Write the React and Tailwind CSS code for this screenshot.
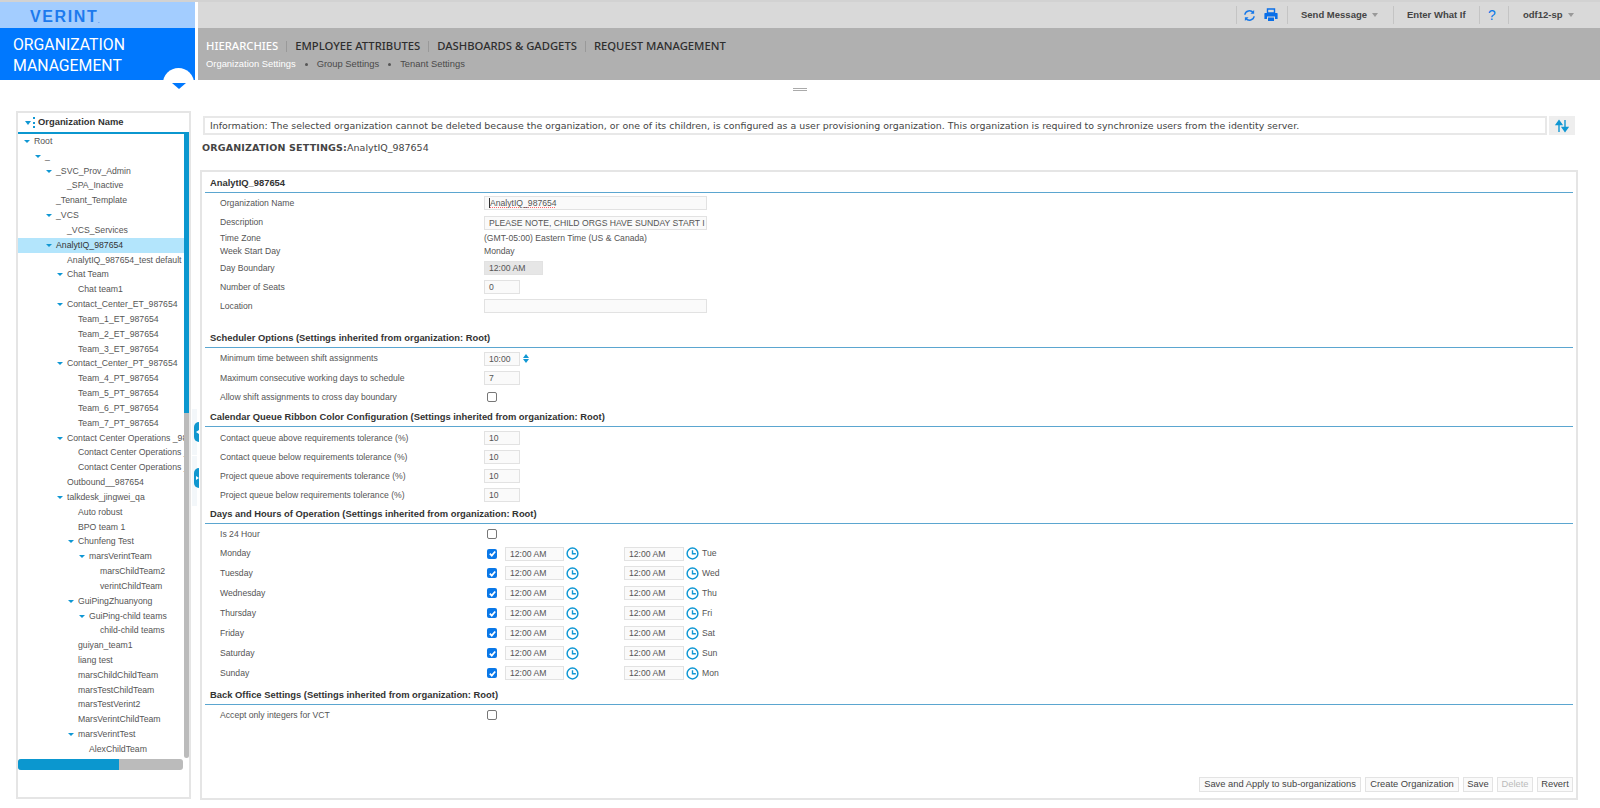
import React from "react";

const tree = [
  [0, "Root", 1], [1, "_", 1], [2, "_SVC_Prov_Admin", 1], [3, "_SPA_Inactive"], [2, "_Tenant_Template"], [2, "_VCS", 1], [3, "_VCS_Services"],
  [2, "AnalytIQ_987654", 1, 1], [3, "AnalytIQ_987654_test default rule"], [3, "Chat Team", 1], [4, "Chat team1"],
  [3, "Contact_Center_ET_987654", 1], [4, "Team_1_ET_987654"], [4, "Team_2_ET_987654"], [4, "Team_3_ET_987654"],
  [3, "Contact_Center_PT_987654", 1], [4, "Team_4_PT_987654"], [4, "Team_5_PT_987654"], [4, "Team_6_PT_987654"], [4, "Team_7_PT_987654"],
  [3, "Contact Center Operations _987654", 1], [4, "Contact Center Operations _1"], [4, "Contact Center Operations _2"],
  [3, "Outbound__987654"], [3, "talkdesk_jingwei_qa", 1], [4, "Auto robust"], [4, "BPO team 1"], [4, "Chunfeng Test", 1],
  [5, "marsVerintTeam", 1], [6, "marsChildTeam2"], [6, "verintChildTeam"], [4, "GuiPingZhuanyong", 1], [5, "GuiPing-child teams", 1], [6, "child-child teams"],
  [4, "guiyan_team1"], [4, "liang test"], [4, "marsChildChildTeam"], [4, "marsTestChildTeam"], [4, "marsTestVerint2"], [4, "MarsVerintChildTeam"],
  [4, "marsVerintTest", 1], [5, "AlexChildTeam"],
];
const indent = ["pl-[16px]", "pl-[27px]", "pl-[38px]", "pl-[49px]", "pl-[60px]", "pl-[71px]", "pl-[82px]"];
const caretAt = ["left-[6px]", "left-[17px]", "left-[28px]", "left-[39px]", "left-[50px]", "left-[61px]", "left-[72px]"];

const Sep = ({ ml }) => <span className={`${ml} w-px h-[18px] bg-[#c4c4c4] shrink-0`} />;
const Caret = ({ ml }) => <span className={`${ml} w-0 h-0 border-x-[3.5px] border-x-transparent border-t-[4px] border-t-[#999]`} />;

function Title({ children, mt }) {
  return (
    <div className={`${mt} mx-[3px] h-[19px] border-b border-[#5ba6d0] pl-[5px] leading-[18px] text-[9.4px] font-bold text-[#333]`}>
      {children}
    </div>
  );
}

function Row({ h, label, children }) {
  return (
    <div className={`${h} flex items-center`}>
      <div className="w-[282px] pl-[18px] text-[#555]">{label}</div>
      <div className="flex items-center">{children}</div>
    </div>
  );
}

function Field({ w = "w-[36px]", h = "h-[14px]", bg = "bg-[#fafafa]", children }) {
  return (
    <div className={`${w} ${h} ${bg} border border-[#e2e2e2] pl-[4px] leading-[12px] text-[#555] whitespace-nowrap overflow-hidden`}>
      {children}
    </div>
  );
}

function Check({ on }) {
  return on ? (
    <div className="ml-[3px] w-[10px] h-[10px] rounded-[2px] bg-[#0a78e8] flex items-center justify-center">
      <svg viewBox="0 0 10 10" className="w-[9px] h-[9px]"><path d="M2 5.2 4.2 7.4 8 2.8" fill="none" stroke="#fff" strokeWidth="1.9" /></svg>
    </div>
  ) : (
    <div className="ml-[3px] w-[10px] h-[10px] rounded-[2px] border border-[#777] bg-white" />
  );
}

const Clock = () => (
  <svg viewBox="0 0 14 14" className="w-[13px] h-[13px] ml-[2px]">
    <circle cx="7" cy="7" r="5.8" fill="none" stroke="#1097d3" strokeWidth="1.6" />
    <path d="M7 3.4V7.3H10.6" fill="none" stroke="#1097d3" strokeWidth="1.5" />
  </svg>
);

function DayRow({ h = "h-[20px]", day, next }) {
  return (
    <Row h={h} label={day}>
      <Check on />
      <div className="ml-[8px] flex items-center">
        <Field w="w-[59px]">12:00 AM</Field>
        <Clock />
        <div className="w-[45px]" />
        <Field w="w-[60px]">12:00 AM</Field>
        <Clock />
        <span className="ml-[3px] text-[#555]">{next}</span>
      </div>
    </Row>
  );
}

const NavSep = () => <span className="mx-[8px] w-px h-[11px] bg-[#999]" />;
const Dot = () => <span className="mx-[9px] w-[3px] h-[3px] rounded-full bg-[#555]" />;

const Btn = ({ w, dim, children }) => (
  <div className={`${w} h-[15px] border border-[#e3e3e3] bg-[#fafafa] text-center text-[9.35px] leading-[13px] whitespace-nowrap ${dim ? "text-[#bbb]" : "text-[#444]"}`}>
    {children}
  </div>
);

function Handle({ top, right }) {
  return (
    <div className={`absolute left-[194px] ${top} w-[5px] h-[20px] rounded-l-full bg-[#1097cf] flex items-center justify-end`}>
      {right ? (
        <span className="w-0 h-0 border-y-[2px] border-y-transparent border-l-[3px] border-l-white" />
      ) : (
        <span className="w-0 h-0 border-y-[2px] border-y-transparent border-r-[3px] border-r-white" />
      )}
    </div>
  );
}

export default function App() {
  return (
    <div className="relative w-[1600px] h-[808px] overflow-hidden bg-white font-[Liberation_Sans,Arial,sans-serif] text-[8.65px]">
      {/* header */}
      <div className="flex h-[80px] border-t-2 border-[#d2d2d2]">
        <div className="w-[195px] shrink-0">
          <div className="relative h-[26px] bg-[#a3cdff]">
            <span className="absolute left-[30px] top-[6px] text-[16px] leading-[18px] font-bold tracking-[1.6px] text-[#1c7aee]">VERINT<span className="absolute left-[68px] top-[11px] text-[5px] leading-[5px] tracking-normal">.</span></span>
          </div>
          <div className="h-[52px] bg-[#0078fe] pl-[13px] pt-[7px] font-[Roboto,sans-serif] text-[15.8px] leading-[20.5px] text-white">
            <div>ORGANIZATION</div>
            <div>MANAGEMENT</div>
          </div>
        </div>
        <div className="ml-[3px] flex-1">
          <div className="h-[26px] bg-[#d9d9d9] flex items-center text-[9.5px] font-bold text-[#444]">
            <Sep ml="ml-[1038px]" />
            <svg viewBox="0 0 14 14" className="ml-[6px] w-[13px] h-[13px]">
              <path d="M2 6.2A5 5 0 0 1 11 4" fill="none" stroke="#1878e8" strokeWidth="1.6" />
              <path d="M12 1v4H8z" fill="#1878e8" />
              <path d="M12 7.8A5 5 0 0 1 3 10" fill="none" stroke="#1878e8" strokeWidth="1.6" />
              <path d="M2 13V9h4z" fill="#1878e8" />
            </svg>
            <svg viewBox="0 0 14 14" className="ml-[8px] w-[14px] h-[14px]">
              <path d="M3.5 1h7v4h-7z" fill="none" stroke="#0a6fe8" strokeWidth="1.4" />
              <path d="M1 5h12a.8.8 0 0 1 .6.8V11h-2.6V8.5H3V11H.4V5.8A.8.8 0 0 1 1 5z" fill="#0a6fe8" />
              <path d="M4 9.5h6V13H4z" fill="#0a6fe8" />
            </svg>
            <Sep ml="ml-[9px]" />
            <span className="ml-[13px] w-[65px] whitespace-nowrap">Send Message</span>
            <Caret ml="ml-[6px]" />
            <Sep ml="ml-[15px]" />
            <span className="ml-[13px] w-[57px] whitespace-nowrap">Enter What If</span>
            <Sep ml="ml-[15px]" />
            <span className="ml-[8px] w-[13px] text-[14px] font-normal text-[#0a78e8]">?</span>
            <Sep ml="ml-[7px]" />
            <span className="ml-[14px] w-[39px] whitespace-nowrap">odf12-sp</span>
            <Caret ml="ml-[6px]" />
          </div>
          <div className="h-[52px] bg-[#b0b0b0] pl-[8px] pt-[8px]">
            <div className="flex items-center h-[20px] font-[Noto_Sans,sans-serif] text-[11.25px] font-medium text-[#2e2e2e] whitespace-nowrap">
              <span className="text-white">HIERARCHIES</span><NavSep />
              <span>EMPLOYEE ATTRIBUTES</span><NavSep />
              <span>DASHBOARDS &amp; GADGETS</span><NavSep />
              <span>REQUEST MANAGEMENT</span>
            </div>
            <div className="flex items-center h-[14px] mt-[1px] text-[9.4px] text-[#4a4a4a] whitespace-nowrap">
              <span className="text-white">Organization Settings</span><Dot />
              <span>Group Settings</span><Dot />
              <span>Tenant Settings</span>
            </div>
          </div>
        </div>
      </div>
      {/* collapse tab */}
      <div className="absolute left-[163px] top-[68px] w-[31px] h-[31px] rounded-full bg-white" />
      <div className="absolute left-[172px] top-[83px] w-0 h-0 border-x-[7px] border-x-transparent border-t-[6px] border-t-[#0078fe]" />
      <div className="absolute left-[793px] top-[88px] w-[14px] h-[3px] border-y border-[#aaa]" />

      {/* body */}
      <div className="flex pl-[16px] pt-[31px]">
        {/* tree panel */}
        <div className="relative w-[175px] h-[688px] shrink-0 border-2 border-[#e5e5e5] text-[8.7px] text-[#555]">
          <div className="flex items-center h-[21px] border-b-2 border-[#0b97cf]">
            <span className="ml-[7px] w-0 h-0 border-x-[3px] border-x-transparent border-t-[4px] border-t-[#1097d3]" />
            <span className="ml-[2px] w-[2px] h-[11px] border-l-2 border-dotted border-[#1097d3]" />
            <span className="ml-[3px] font-bold text-[9.4px] text-[#333]">Organization Name</span>
          </div>
          <div className="w-[166px] overflow-hidden whitespace-nowrap">
            {tree.map(([lvl, name, open, sel], i) => (
              <div
                key={i}
                className={`relative h-[14.84px] leading-[14px] ${indent[lvl]} ${sel ? "bg-[#b3e5fc] text-[#333]" : ""}`}
              >
                {open ? (
                  <span className={`absolute top-[6px] ${caretAt[lvl]} w-0 h-0 border-x-[3px] border-x-transparent border-t-[3.5px] border-t-[#1097d3]`} />
                ) : null}
                {name}
              </div>
            ))}
          </div>
          {/* v scrollbar */}
          <div className="absolute left-[166px] top-[19px] w-[5px] h-[626px] bg-[#bbb] rounded-b-full">
            <div className="h-[281px] bg-[#0b97cf]" />
          </div>
          {/* h scrollbar */}
          <div className="absolute left-0 top-[646px] w-[165px] h-[11px] rounded-[3px] bg-[#bbb] overflow-hidden">
            <div className="w-[101px] h-full bg-[#0b97cf]" />
          </div>
        </div>

        {/* right */}
        <div className="relative ml-[9px] w-[1378px]">
          <div className="flex h-[19px] ml-[3px] mt-[5px]">
            <div className="w-[1344px] border-2 border-[#e8e8e8] pl-[5px] font-[DejaVu_Sans,sans-serif] text-[9.43px] leading-[15px] text-[#444] whitespace-nowrap overflow-hidden">
              Information: The selected organization cannot be deleted because the organization, or one of its children, is configured as a user provisioning organization. This organization is required to synchronize users from the identity server.
            </div>
            <div className="ml-[2px] w-[26px] bg-[#eeeeee] flex items-center justify-center">
              <svg viewBox="0 0 14 14" className="w-[14px] h-[14px]">
                <path d="M4 13V3M1.2 5.6 4 1.6l2.8 4z" fill="#1097d3" stroke="#1097d3" strokeWidth="1.4" />
                <path d="M10 1v10M7.2 8.4 10 12.4l2.8-4z" fill="#1097d3" stroke="#1097d3" strokeWidth="1.4" />
              </svg>
            </div>
          </div>
          <div className="mt-[5px] ml-[2px] h-[16px] leading-[16px] font-[DejaVu_Sans,sans-serif] text-[9.5px] text-[#444] whitespace-nowrap">
            <span className="font-bold tracking-[0.17px]">ORGANIZATION SETTINGS:</span>AnalytIQ_987654
          </div>

          <div className="relative mt-[14px] h-[630px] w-[1378px] border-2 border-[#e5e5e5]">
            <Title mt="mt-[2px]">AnalytIQ_987654</Title>
            <Row h="h-[20px]" label="Organization Name">
              <Field w="w-[223px]"><span className="border-l border-[#333] underline decoration-dotted decoration-red-400">AnalytIQ_987654</span></Field>
            </Row>
            <Row h="h-[19px]" label="Description">
              <Field w="w-[223px]">PLEASE NOTE, CHILD ORGS HAVE SUNDAY START I</Field>
            </Row>
            <Row h="h-[12px]" label="Time Zone"><span className="text-[#555]">(GMT-05:00) Eastern Time (US &amp; Canada)</span></Row>
            <Row h="h-[14px]" label="Week Start Day"><span className="text-[#555]">Monday</span></Row>
            <Row h="h-[20px]" label="Day Boundary"><Field w="w-[59px]" bg="bg-[#e6e6e6]">12:00 AM</Field></Row>
            <Row h="h-[18px]" label="Number of Seats"><Field>0</Field></Row>
            <Row h="h-[20px]" label="Location"><Field w="w-[223px]" /></Row>

            <Title mt="mt-[13px]">Scheduler Options (Settings inherited from organization: Root)</Title>
            <Row h="h-[21px]" label="Minimum time between shift assignments">
              <Field>10:00</Field>
              <span className="ml-[3px] flex flex-col gap-[1px]">
                <span className="w-0 h-0 border-x-[3px] border-x-transparent border-b-[4px] border-b-[#1097d3]" />
                <span className="w-0 h-0 border-x-[3px] border-x-transparent border-t-[4px] border-t-[#1097d3]" />
              </span>
            </Row>
            <Row h="h-[18px]" label="Maximum consecutive working days to schedule"><Field>7</Field></Row>
            <Row h="h-[20px]" label="Allow shift assignments to cross day boundary"><Check /></Row>

            <Title mt="mt-[1px]">Calendar Queue Ribbon Color Configuration (Settings inherited from organization: Root)</Title>
            <Row h="h-[22px]" label="Contact queue above requirements tolerance (%)"><Field>10</Field></Row>
            <Row h="h-[16px]" label="Contact queue below requirements tolerance (%)"><Field>10</Field></Row>
            <Row h="h-[22px]" label="Project queue above requirements tolerance (%)"><Field>10</Field></Row>
            <Row h="h-[16px]" label="Project queue below requirements tolerance (%)"><Field>10</Field></Row>

            <Title mt="mt-[2px]">Days and Hours of Operation (Settings inherited from organization: Root)</Title>
            <Row h="h-[20px]" label="Is 24 Hour"><Check /></Row>
            <DayRow h="h-[19px]" day="Monday" next="Tue" />
            <DayRow day="Tuesday" next="Wed" />
            <DayRow day="Wednesday" next="Thu" />
            <DayRow day="Thursday" next="Fri" />
            <DayRow day="Friday" next="Sat" />
            <DayRow day="Saturday" next="Sun" />
            <DayRow day="Sunday" next="Mon" />

            <Title mt="mt-[3px]">Back Office Settings (Settings inherited from organization: Root)</Title>
            <Row h="h-[20px]" label="Accept only integers for VCT"><Check /></Row>

            <div className="absolute right-[3px] bottom-[6px] flex gap-[4px]">
              <Btn w="w-[162px]">Save and Apply to sub-organizations</Btn>
              <Btn w="w-[94px]">Create Organization</Btn>
              <Btn w="w-[30px]">Save</Btn>
              <Btn w="w-[36px]" dim>Delete</Btn>
              <Btn w="w-[36px]">Revert</Btn>
            </div>
          </div>
        </div>
      </div>

      {/* side handles */}
      <div className="absolute left-[192px] top-[409px] w-[5px] h-[46px] bg-[#f3f7fa]" />
      <div className="absolute left-[192px] top-[456px] w-[5px] h-[50px] bg-[#f3f7fa]" />
      <Handle top="top-[422px]" />
      <Handle top="top-[468px]" right />
    </div>
  );
}
